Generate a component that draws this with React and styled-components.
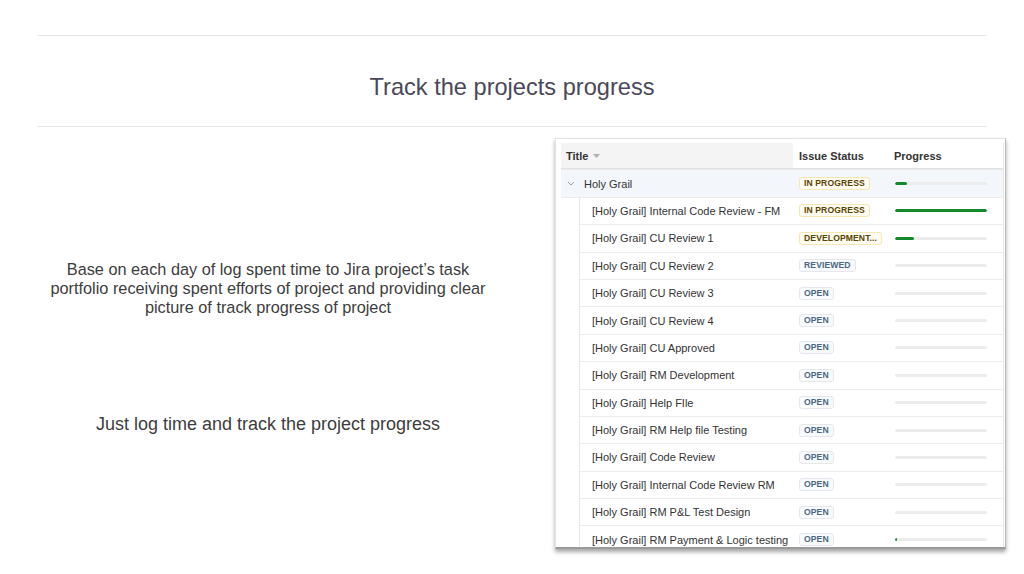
import React from 'react';
import styled, { createGlobalStyle } from 'styled-components';

const GlobalStyle = createGlobalStyle`
	html, body {
		margin: 0;
		padding: 0;
		background: #ffffff;
	}
	body {
		font-family: "Liberation Sans", Arial, sans-serif;
	}
`;

const Page = styled.div`
	width: 1024px;
	height: 574px;
	overflow: hidden;
	display: flex;
	flex-direction: column;
`;

const Header = styled.div`
	margin: 35px 38px 0;
	border-top: 1px solid #e4e4e4;
	border-bottom: 1px solid #e4e4e4;
	padding-top: 38px;
	height: 52px;
`;

const Heading = styled.h1`
	margin: 0;
	text-align: center;
	font-size: 23.6px;
	line-height: 26px;
	font-weight: normal;
	color: #4b4859;
`;

const Content = styled.div`
	display: flex;
	align-items: flex-start;
	margin-top: 11px;
`;

const TextColumn = styled.div`
	width: 460px;
	margin-left: 38px;
	padding-top: 122px;
	text-align: center;
	color: #3d3d3d;
`;

const Lead = styled.p`
	margin: 0;
	font-size: 16.3px;
	line-height: 19px;
	white-space: nowrap;
`;

const Tagline = styled.p`
	margin: 96px 0 0;
	font-size: 18px;
	line-height: 22px;
`;

const Panel = styled.div`
	margin-left: 57px;
	width: 451px;
	height: 411px;
	box-sizing: border-box;
	padding: 4px 2px 0 5px;
	background: #fff;
	border: 1px solid #e2e2e2;
	border-right-color: #b8b8b8;
	border-bottom: 2px solid #9a9a9a;
	box-shadow: 0 3px 4px rgba(0, 0, 0, 0.35);
	overflow: hidden;
`;

const Table = styled.div`
	width: 442px;
	border-right: 1px solid #e6e6e6;
	font-size: 11px;
	color: #333;
`;

const Row = styled.div`
	display: grid;
	grid-template-columns: ${(p) => (p.child ? '19px 213px' : '232px')} 100px 110px;
	height: 27.4px;
	box-sizing: border-box;
	align-items: center;
	background: ${(p) => (p.parent ? '#f3f7fb' : '#fff')};
	border-bottom: ${(p) => (p.child ? 'none' : '1px solid #ebebeb')};
`;

const HeadCell = styled.div`
	height: 100%;
	display: flex;
	align-items: center;
	gap: 5px;
	padding-left: ${(p) => p.pad || 6}px;
	font-weight: bold;
	background: ${(p) => (p.grey ? '#f4f4f4' : '#fff')};
	border-bottom: 1px solid #e2e2e2;
	box-sizing: border-box;
`;

const Indent = styled.div`
	height: 100%;
	border-right: 1px solid #e6e6e6;
`;

const Cell = styled.div`
	height: 100%;
	display: flex;
	align-items: center;
	gap: 9px;
	padding-left: ${(p) => p.pad || 0}px;
	box-sizing: border-box;
	white-space: nowrap;
	overflow: hidden;
	border-bottom: ${(p) => (p.line ? '1px solid #ebebeb' : 'none')};
`;

const Lozenge = styled.span`
	display: inline-block;
	font-size: 8.6px;
	font-weight: bold;
	letter-spacing: 0.1px;
	line-height: 11px;
	padding: 0 4px;
	border-radius: 3px;
	border: 1px solid ${(p) => (p.tone === 'yellow' ? '#f7e6b0' : '#e4e8ee')};
	background: ${(p) => (p.tone === 'yellow' ? '#fffcf2' : '#f8fafc')};
	color: ${(p) => (p.tone === 'yellow' ? '#594300' : '#4a6785')};
`;

const Track = styled.div`
	width: 92px;
	height: 3px;
	margin-left: 2px;
	border-radius: 2px;
	background: #ececec;
	overflow: hidden;
`;

const Fill = styled.div`
	height: 100%;
	border-radius: 2px;
	background: #14892c;
`;

const Chevron = () => (
	<svg width="8" height="5" viewBox="0 0 8 5">
		<path d="M1 1 L4 4 L7 1" fill="none" stroke="#a0a0a0" strokeWidth="1" />
	</svg>
);

const Caret = () => (
	<svg width="7" height="4" viewBox="0 0 7 4">
		<path d="M0 0 L7 0 L3.5 4 Z" fill="#b0b0b0" />
	</svg>
);

const issues = [
	{ title: '[Holy Grail] Internal Code Review - FM', status: 'IN PROGRESS', tone: 'yellow', done: 100 },
	{ title: '[Holy Grail] CU Review 1', status: 'DEVELOPMENT...', tone: 'yellow', done: 21 },
	{ title: '[Holy Grail] CU Review 2', status: 'REVIEWED', done: 0 },
	{ title: '[Holy Grail] CU Review 3', status: 'OPEN', done: 0 },
	{ title: '[Holy Grail] CU Review 4', status: 'OPEN', done: 0 },
	{ title: '[Holy Grail] CU Approved', status: 'OPEN', done: 0 },
	{ title: '[Holy Grail] RM Development', status: 'OPEN', done: 0 },
	{ title: '[Holy Grail] Help FIle', status: 'OPEN', done: 0 },
	{ title: '[Holy Grail] RM Help file Testing', status: 'OPEN', done: 0 },
	{ title: '[Holy Grail] Code Review', status: 'OPEN', done: 0 },
	{ title: '[Holy Grail] Internal Code Review RM', status: 'OPEN', done: 0 },
	{ title: '[Holy Grail] RM P&L Test Design', status: 'OPEN', done: 0 },
	{ title: '[Holy Grail] RM Payment & Logic testing', status: 'OPEN', done: 2 }
];

const Progress = ({ done }) => (
	<Track>
		<Fill style={{ width: done + '%' }} />
	</Track>
);

export default function App() {
	return (
		<Page>
			<GlobalStyle />
			<Header>
				<Heading>Track the projects progress</Heading>
			</Header>
			<Content>
				<TextColumn>
					<Lead>
						Base on each day of log spent time to Jira project’s task
						<br />
						portfolio receiving spent efforts of project and providing clear
						<br />
						picture of track progress of project
					</Lead>
					<Tagline>Just log time and track the project progress</Tagline>
				</TextColumn>
				<Panel>
					<Table>
						<Row>
							<HeadCell grey pad={5}>
								Title <Caret />
							</HeadCell>
							<HeadCell>Issue Status</HeadCell>
							<HeadCell pad={1}>Progress</HeadCell>
						</Row>
						<Row parent>
							<Cell pad={6}>
								<Chevron />
								Holy Grail
							</Cell>
							<Cell pad={6}>
								<Lozenge tone="yellow">IN PROGRESS</Lozenge>
							</Cell>
							<Cell>
								<Progress done={13} />
							</Cell>
						</Row>
						{issues.map((issue) => (
							<Row child key={issue.title}>
								<Indent />
								<Cell line pad={12}>{issue.title}</Cell>
								<Cell line pad={6}>
									<Lozenge tone={issue.tone}>{issue.status}</Lozenge>
								</Cell>
								<Cell line>
									<Progress done={issue.done} />
								</Cell>
							</Row>
						))}
					</Table>
				</Panel>
			</Content>
		</Page>
	);
}
